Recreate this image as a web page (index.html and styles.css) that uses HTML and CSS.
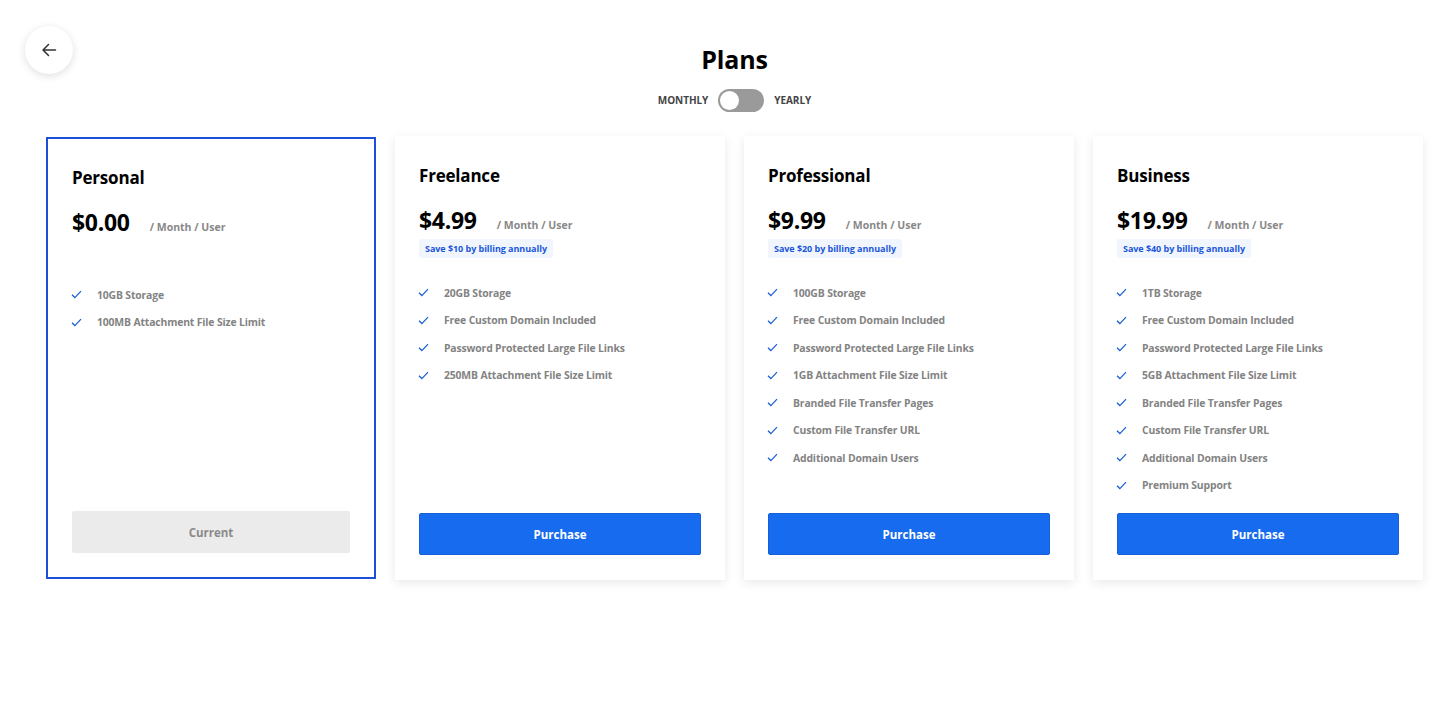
FILE: index.html
```html
<!DOCTYPE html>
<html lang="en">
<head>
<meta charset="utf-8">
<title>Plans</title>
<link rel="stylesheet" href="styles.css">
</head>
<body>
<div class="page">
  <button class="back" aria-label="Back">
    <svg width="16" height="16" viewBox="0 0 16 16"><path d="M14.5 8H2M7.5 2.5L2 8l5.5 5.5" fill="none" stroke="#333" stroke-width="1.5" stroke-linecap="round" stroke-linejoin="round"/></svg>
  </button>
  <header class="head">
    <h1 class="title">Plans</h1>
    <div class="toggle-row">
      <span class="toggle-label">MONTHLY</span>
      <span class="switch"><span class="knob"></span></span>
      <span class="toggle-label">YEARLY</span>
    </div>
  </header>

  <main class="cards">
    <section class="card current">
      <h2 class="plan">Personal</h2>
      <div class="price-row"><span class="price">$0.00</span><span class="per">/ Month / User</span></div>
      <div class="save-row"></div>
      <ul class="features">
        <li><svg class="chk" viewBox="0 0 12 10"><path d="M1 5.2l3.2 3.2L11 1.2" fill="none" stroke="#1a5fd6" stroke-width="1.4"/></svg>10GB Storage</li>
        <li><svg class="chk" viewBox="0 0 12 10"><path d="M1 5.2l3.2 3.2L11 1.2" fill="none" stroke="#1a5fd6" stroke-width="1.4"/></svg>100MB Attachment File Size Limit</li>
      </ul>
      <button class="btn btn-current">Current</button>
    </section>

    <section class="card">
      <h2 class="plan">Freelance</h2>
      <div class="price-row"><span class="price">$4.99</span><span class="per">/ Month / User</span></div>
      <div class="save-row"><span class="save">Save $10 by billing annually</span></div>
      <ul class="features">
        <li><svg class="chk" viewBox="0 0 12 10"><path d="M1 5.2l3.2 3.2L11 1.2" fill="none" stroke="#1a5fd6" stroke-width="1.4"/></svg>20GB Storage</li>
        <li><svg class="chk" viewBox="0 0 12 10"><path d="M1 5.2l3.2 3.2L11 1.2" fill="none" stroke="#1a5fd6" stroke-width="1.4"/></svg>Free Custom Domain Included</li>
        <li><svg class="chk" viewBox="0 0 12 10"><path d="M1 5.2l3.2 3.2L11 1.2" fill="none" stroke="#1a5fd6" stroke-width="1.4"/></svg>Password Protected Large File Links</li>
        <li><svg class="chk" viewBox="0 0 12 10"><path d="M1 5.2l3.2 3.2L11 1.2" fill="none" stroke="#1a5fd6" stroke-width="1.4"/></svg>250MB Attachment File Size Limit</li>
      </ul>
      <button class="btn btn-buy">Purchase</button>
    </section>

    <section class="card">
      <h2 class="plan">Professional</h2>
      <div class="price-row"><span class="price">$9.99</span><span class="per">/ Month / User</span></div>
      <div class="save-row"><span class="save">Save $20 by billing annually</span></div>
      <ul class="features">
        <li><svg class="chk" viewBox="0 0 12 10"><path d="M1 5.2l3.2 3.2L11 1.2" fill="none" stroke="#1a5fd6" stroke-width="1.4"/></svg>100GB Storage</li>
        <li><svg class="chk" viewBox="0 0 12 10"><path d="M1 5.2l3.2 3.2L11 1.2" fill="none" stroke="#1a5fd6" stroke-width="1.4"/></svg>Free Custom Domain Included</li>
        <li><svg class="chk" viewBox="0 0 12 10"><path d="M1 5.2l3.2 3.2L11 1.2" fill="none" stroke="#1a5fd6" stroke-width="1.4"/></svg>Password Protected Large File Links</li>
        <li><svg class="chk" viewBox="0 0 12 10"><path d="M1 5.2l3.2 3.2L11 1.2" fill="none" stroke="#1a5fd6" stroke-width="1.4"/></svg>1GB Attachment File Size Limit</li>
        <li><svg class="chk" viewBox="0 0 12 10"><path d="M1 5.2l3.2 3.2L11 1.2" fill="none" stroke="#1a5fd6" stroke-width="1.4"/></svg>Branded File Transfer Pages</li>
        <li><svg class="chk" viewBox="0 0 12 10"><path d="M1 5.2l3.2 3.2L11 1.2" fill="none" stroke="#1a5fd6" stroke-width="1.4"/></svg>Custom File Transfer URL</li>
        <li><svg class="chk" viewBox="0 0 12 10"><path d="M1 5.2l3.2 3.2L11 1.2" fill="none" stroke="#1a5fd6" stroke-width="1.4"/></svg>Additional Domain Users</li>
      </ul>
      <button class="btn btn-buy">Purchase</button>
    </section>

    <section class="card">
      <h2 class="plan">Business</h2>
      <div class="price-row"><span class="price">$19.99</span><span class="per">/ Month / User</span></div>
      <div class="save-row"><span class="save">Save $40 by billing annually</span></div>
      <ul class="features">
        <li><svg class="chk" viewBox="0 0 12 10"><path d="M1 5.2l3.2 3.2L11 1.2" fill="none" stroke="#1a5fd6" stroke-width="1.4"/></svg>1TB Storage</li>
        <li><svg class="chk" viewBox="0 0 12 10"><path d="M1 5.2l3.2 3.2L11 1.2" fill="none" stroke="#1a5fd6" stroke-width="1.4"/></svg>Free Custom Domain Included</li>
        <li><svg class="chk" viewBox="0 0 12 10"><path d="M1 5.2l3.2 3.2L11 1.2" fill="none" stroke="#1a5fd6" stroke-width="1.4"/></svg>Password Protected Large File Links</li>
        <li><svg class="chk" viewBox="0 0 12 10"><path d="M1 5.2l3.2 3.2L11 1.2" fill="none" stroke="#1a5fd6" stroke-width="1.4"/></svg>5GB Attachment File Size Limit</li>
        <li><svg class="chk" viewBox="0 0 12 10"><path d="M1 5.2l3.2 3.2L11 1.2" fill="none" stroke="#1a5fd6" stroke-width="1.4"/></svg>Branded File Transfer Pages</li>
        <li><svg class="chk" viewBox="0 0 12 10"><path d="M1 5.2l3.2 3.2L11 1.2" fill="none" stroke="#1a5fd6" stroke-width="1.4"/></svg>Custom File Transfer URL</li>
        <li><svg class="chk" viewBox="0 0 12 10"><path d="M1 5.2l3.2 3.2L11 1.2" fill="none" stroke="#1a5fd6" stroke-width="1.4"/></svg>Additional Domain Users</li>
        <li><svg class="chk" viewBox="0 0 12 10"><path d="M1 5.2l3.2 3.2L11 1.2" fill="none" stroke="#1a5fd6" stroke-width="1.4"/></svg>Premium Support</li>
      </ul>
      <button class="btn btn-buy">Purchase</button>
    </section>
  </main>
</div>
</body>
</html>
```

FILE: styles.css
```css
* { box-sizing: border-box; }
html, body { margin: 0; padding: 0; background: #fff; }
body {
  font-family: "Open Sans", "Noto Sans", "Liberation Sans", sans-serif;
  color: #000;
  width: 1456px;
  height: 717px;
  overflow: hidden;
}
.page {
  position: relative;
  width: 1377px;
  margin-left: 46px;
}
.back {
  position: absolute;
  left: -21px;
  top: 26px;
  width: 48px;
  height: 48px;
  border-radius: 50%;
  border: none;
  background: #fff;
  box-shadow: 0 2px 8px rgba(0,0,0,0.13);
  display: flex;
  align-items: center;
  justify-content: center;
  padding: 0;
}
.head {
  display: flex;
  flex-direction: column;
  align-items: center;
  padding-top: 42px;
}
.title {
  margin: 0;
  font-size: 25px;
  font-weight: 700;
  line-height: 34px;
  letter-spacing: -0.2px;
}
.toggle-row {
  display: flex;
  align-items: center;
  gap: 8px;
  margin-top: 12px;
  height: 24px;
}
.toggle-label {
  font-size: 10px;
  font-weight: 700;
  color: #444;
  letter-spacing: -0.05px;
}
.switch {
  width: 46px;
  height: 23px;
  border-radius: 12px;
  background: #9a9a9a;
  padding: 2px;
  display: flex;
  margin: 0 2px;
}
.knob {
  width: 19px;
  height: 19px;
  border-radius: 50%;
  background: #fff;
}
.cards {
  display: flex;
  align-items: flex-start;
  gap: 19px;
  margin-top: 24px;
}
.card {
  width: 330px;
  height: 444px;
  background: #fff;
  box-shadow: 0 3px 10px rgba(0,0,0,0.09);
  padding: 28px 24px 25px 24px;
  display: flex;
  flex-direction: column;
}
.card.current {
  box-shadow: none;
  border: 2px solid #1d4fd8;
  margin-top: 1px;
  height: 442px;
  padding: 27px 24px 24px 24px;
}
.plan {
  margin: 0;
  font-size: 17px;
  font-weight: 700;
  line-height: 24px;
  letter-spacing: -0.2px;
}
.price-row {
  display: flex;
  align-items: baseline;
  margin-top: 17px;
  height: 30px;
}
.price {
  font-size: 23px;
  font-weight: 700;
  line-height: 30px;
  letter-spacing: -0.3px;
}
.per {
  font-size: 10.5px;
  font-weight: 700;
  color: #888;
  margin-left: 20px;
}
.save-row {
  height: 19px;
  margin-top: 4px;
  display: flex;
}
.save {
  background: #f1f6fe;
  color: #1a56db;
  font-size: 9px;
  font-weight: 700;
  line-height: 19px;
  padding: 0 6px;
  border-radius: 2px;
  letter-spacing: -0.05px;
}
.features {
  list-style: none;
  margin: 21px 0 0 0;
  padding: 0;
}
.features li {
  display: flex;
  align-items: center;
  height: 27.5px;
  font-size: 10.4px;
  font-weight: 700;
  color: #838383;
  letter-spacing: -0.15px;
}
.chk {
  width: 11px;
  height: 9px;
  margin-left: -1px;
  margin-right: 15px;
  flex: none;
}
.btn {
  margin-top: auto;
  height: 42px;
  width: 100%;
  font-family: inherit;
  font-size: 11.5px;
  font-weight: 700;
  border-radius: 2px;
  cursor: pointer;
}
.btn-current {
  background: #ebebeb;
  border: none;
  color: #8a8a8a;
}
.btn-buy {
  background: #176bef;
  border: 1px solid #1560d8;
  color: #fff;
}
```
